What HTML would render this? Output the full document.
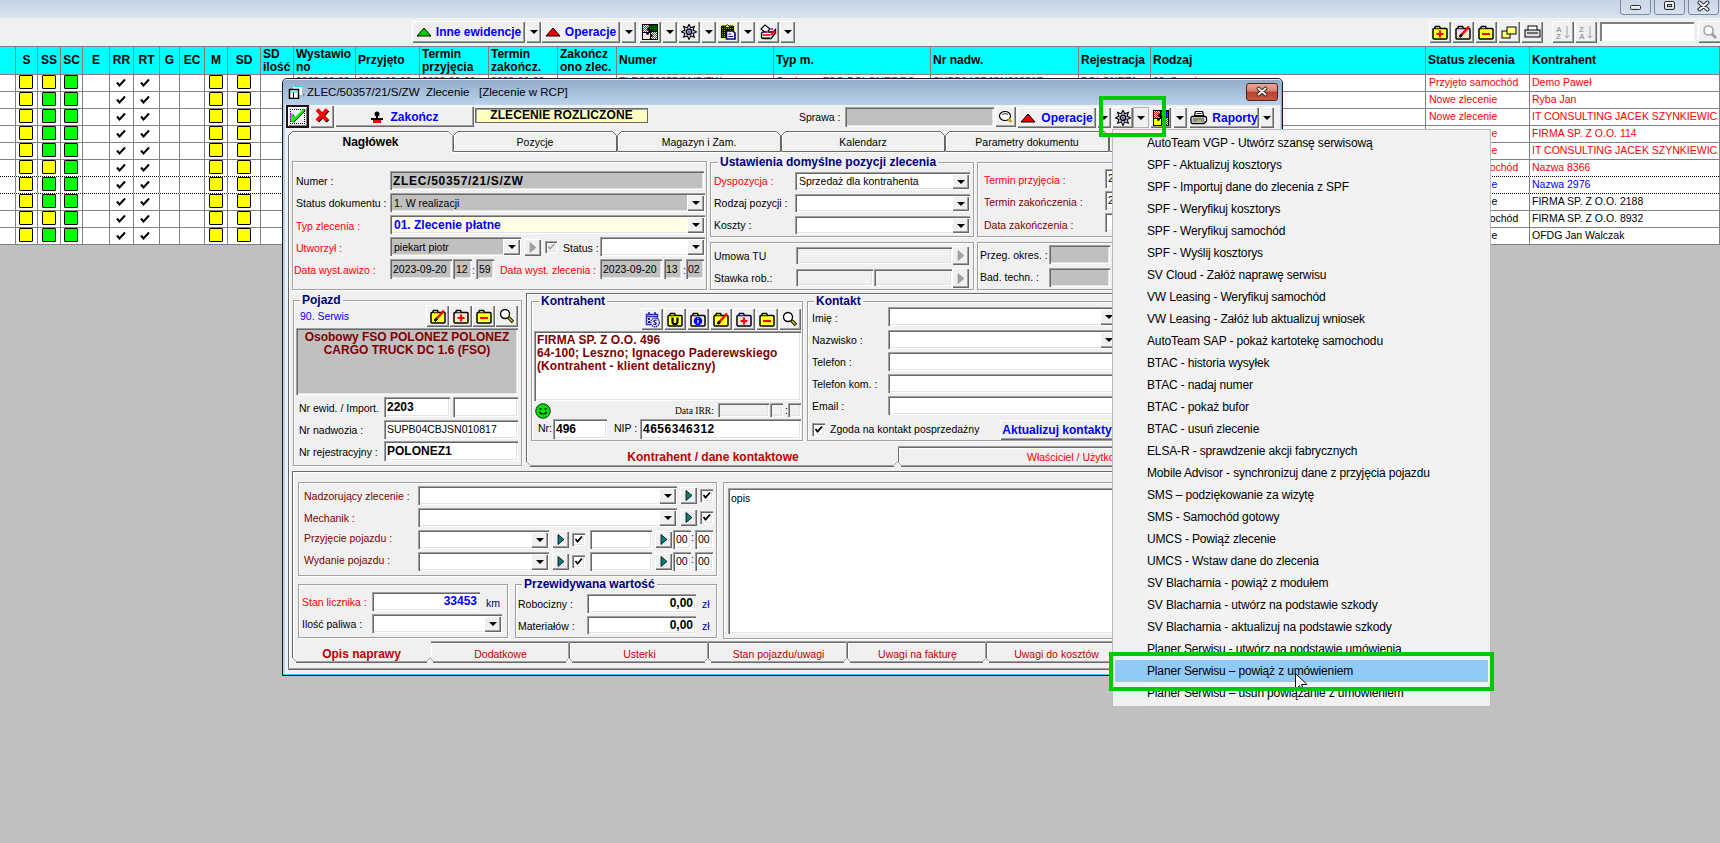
<!DOCTYPE html><html><head><meta charset="utf-8"><style>
*{box-sizing:border-box}
body{margin:0;width:1720px;height:843px;overflow:hidden;position:relative;background:#c0c0c0;font-family:"Liberation Sans",sans-serif;font-size:10.5px;color:#000}
div{position:absolute}
.t{white-space:pre;line-height:12px}
.b{font-weight:bold;font-size:12px}
.btn{background:#f0f0f0;box-shadow:inset 1px 1px #fff,inset -1px -1px #696969,inset -2px -2px #a0a0a0;display:flex;align-items:center;justify-content:center;white-space:pre}
.tri{display:block;width:0;height:0;border-left:4px solid transparent;border-right:4px solid transparent;border-top:4px solid #000}
.sunk{background:#fff;box-shadow:inset 2px 2px #808080,inset -1px -1px #fff}

.fld{box-shadow:inset 1px 1px #a0a0a0,inset 2px 2px #696969,inset -1px -1px #fff,inset -2px -2px #e3e3e3;overflow:hidden;white-space:pre}
.etch{border:1px solid #a0a0a0;box-shadow:inset 1px 1px #fff,1px 1px #fff}
</style></head><body><div style="left:0px;top:0px;width:1720px;height:18px;background:linear-gradient(#c4d1e1,#d9e4f1)"></div>
<div style="left:1620px;top:-3px;width:31px;height:18px;border:1px solid #7a88a4;border-radius:3px;background:linear-gradient(#c9d5e5,#d6e1ee)"></div>
<div style="left:1654px;top:-3px;width:31px;height:18px;border:1px solid #7a88a4;border-radius:3px;background:linear-gradient(#c9d5e5,#d6e1ee)"></div>
<div style="left:1688px;top:-3px;width:31px;height:18px;border:1px solid #7a88a4;border-radius:3px;background:linear-gradient(#c9d5e5,#d6e1ee)"></div>
<div style="left:1630px;top:5px;width:11px;height:5px;border:1px solid #2a2a3a;border-radius:1.5px;background:linear-gradient(#fafafa,#d8d8d8)"></div>
<div style="left:1664px;top:1px;width:11px;height:9px;border:1px solid #2a2a3a;border-radius:2px;background:linear-gradient(#fafafa,#d8d8d8)"></div>
<div style="left:1667px;top:4px;width:5px;height:3px;border:1px solid #2a2a3a;background:#c9d5e5"></div>
<svg style="position:absolute;left:1697px;top:0" width="14" height="12"><path d="M2.5 2.5 L10.5 9.5 M10.5 2.5 L2.5 9.5" stroke="#2a2a3a" stroke-width="4" stroke-linecap="round"/><path d="M2.5 2.5 L10.5 9.5 M10.5 2.5 L2.5 9.5" stroke="#f4f4f4" stroke-width="2" stroke-linecap="round"/></svg>
<div style="left:0px;top:18px;width:1720px;height:28px;background:#f0f0f0"></div>
<div class="btn" style="left:412px;top:21px;width:113px;height:22px;"><svg width="16" height="10" style="margin-right:4px"><path d="M1 9 L8 1 L15 9 Z" fill="#00d000" stroke="#000" stroke-width="1"/></svg><span class="b" style="color:#0000ff;position:static">Inne ewidencje</span></div>
<div class="btn" style="left:526px;top:21px;width:15px;height:22px;"><i class="tri"></i></div>
<div class="btn" style="left:541px;top:21px;width:79px;height:22px;"><svg width="16" height="10" style="margin-right:4px"><path d="M1 9 L8 1 L15 9 Z" fill="#f00000" stroke="#000" stroke-width="1"/></svg><span class="b" style="color:#0000ff;position:static">Operacje</span></div>
<div class="btn" style="left:621px;top:21px;width:15px;height:22px;"><i class="tri"></i></div>
<div class="btn" style="left:639px;top:21px;width:22px;height:22px;"><svg width="16" height="16"><defs><pattern id="dr" width="2" height="2" patternUnits="userSpaceOnUse"><rect width="2" height="2" fill="#ff0000"/><rect width="1" height="1" fill="#fff"/><rect x="1" y="1" width="1" height="1" fill="#fff"/></pattern><pattern id="db" width="2" height="2" patternUnits="userSpaceOnUse"><rect width="2" height="2" fill="#0000ff"/><rect width="1" height="1" fill="#008000"/></pattern><pattern id="dy" width="2" height="2" patternUnits="userSpaceOnUse"><rect width="2" height="2" fill="#ffff00"/><rect width="1" height="1" fill="#fff"/><rect x="1" y="1" width="1" height="1" fill="#fff"/></pattern><pattern id="dg" width="2" height="2" patternUnits="userSpaceOnUse"><rect width="2" height="2" fill="#008000"/><rect width="1" height="1" fill="#fff"/><rect x="1" y="1" width="1" height="1" fill="#fff"/></pattern></defs><rect x="0" y="0" width="16" height="16" fill="#000"/><path d="M1 1 H7 V3 Q5 3 5 5 Q5 7 7 7 V8 H1 Z" fill="url(#dr)"/><path d="M8 1 H15 V7 H11 Q11 5 9.5 5 Q8 5 8 7 Z" fill="url(#db)"/><path d="M1 9 H4 Q4 11 5.5 11 Q7 11 7 9 H8 V15 H1 Z" fill="url(#dy)"/><path d="M9 8 H15 V15 H9 V13 Q11 13 11 11.5 Q11 10 9 10 Z" fill="url(#dg)"/></svg></div>
<div class="btn" style="left:662px;top:21px;width:15px;height:22px;"><i class="tri"></i></div>
<div class="btn" style="left:678px;top:21px;width:22px;height:22px;"><svg width="16" height="16" viewBox="0 0 16 16"><path d="M8.00 0.20 L9.68 3.73 L13.37 2.43 L12.07 6.12 L15.60 7.80 L12.07 9.48 L13.37 13.17 L9.68 11.87 L8.00 15.40 L6.32 11.87 L2.63 13.17 L3.93 9.48 L0.40 7.80 L3.93 6.12 L2.63 2.43 L6.32 3.73 Z" fill="#d4d4ff" stroke="#000" stroke-width="1.1" stroke-linejoin="miter"/><circle cx="8" cy="7.8" r="2.7" fill="#b0b0e0" stroke="#000" stroke-width="1.4"/><rect x="7" y="6.8" width="2" height="2" fill="#606090"/></svg></div>
<div class="btn" style="left:701px;top:21px;width:15px;height:22px;"><i class="tri"></i></div>
<div class="btn" style="left:717px;top:21px;width:22px;height:22px;"><svg width="16" height="16"><defs><pattern id="dk" width="2" height="2" patternUnits="userSpaceOnUse"><rect width="2" height="2" fill="#000"/><rect width="1" height="1" fill="#a0a000"/></pattern></defs><path d="M1.5 3 Q1.5 2 2.5 2 H12.5 Q13.5 2 13.5 3 V13.5 H1.5 Z" fill="url(#dk)" stroke="#000" stroke-width="1.2"/><path d="M4.5 3.5 L7.5 0.5 L10.5 3.5 Z" fill="#ffff00" stroke="#000" stroke-width="0.8"/><path d="M6.5 7 H13 L15 9 V15 H6.5 Z" fill="#fff" stroke="#000080" stroke-width="1.6"/><path d="M8.5 10 H11 M8.5 12.5 H13" stroke="#000080" stroke-width="1.2"/></svg></div>
<div class="btn" style="left:740px;top:21px;width:15px;height:22px;"><i class="tri"></i></div>
<div class="btn" style="left:757px;top:21px;width:22px;height:22px;"><svg width="17" height="16"><path d="M1 5 L5 1 L10 5 L6 9 Z" fill="#fff" stroke="#000" stroke-width="1.2"/><path d="M1.5 10 Q1.5 8 3 8 H13 L15.5 5.5 V9 L11 14.5 H3 Q1.5 14.5 1.5 12.5 Z" fill="#fff" stroke="#000" stroke-width="1.3"/><path d="M2.5 11 H10.5" stroke="#f00" stroke-width="1.6"/><path d="M3 13.5 H10" stroke="#f00" stroke-width="1" stroke-dasharray="1.5 0.8"/><path d="M11 11 L15 7" stroke="#f00" stroke-width="2.2"/><rect x="11" y="4" width="2" height="2" fill="#f0f"/><rect x="6" y="7" width="2" height="2" fill="#f0f"/></svg></div>
<div class="btn" style="left:780px;top:21px;width:15px;height:22px;"><i class="tri"></i></div>
<div class="btn" style="left:1429px;top:21px;width:22px;height:22px;"><svg width="16" height="15"><defs><pattern id="dyl" width="2" height="2" patternUnits="userSpaceOnUse"><rect width="2" height="2" fill="#ffff00"/><rect width="1" height="1" fill="#ffffff"/><rect x="1" y="1" width="1" height="1" fill="#ffffff"/></pattern></defs><path d="M1 4.5 Q1 3.5 2 3.5 H2.5 L3.5 1.5 H7.5 L8.5 3.5 H14 Q15 3.5 15 4.5 V13 Q15 14 14 14 H2 Q1 14 1 13 Z" fill="url(#dyl)" stroke="#000" stroke-width="1.5"/><path d="M3 3.8 H8" stroke="#000" stroke-width="1"/><path d="M8 5.5 V12.5 M4.5 9 H11.5" stroke="#f00" stroke-width="2.2"/></svg></div>
<div class="btn" style="left:1452px;top:21px;width:22px;height:22px;"><svg width="16" height="15"><defs><pattern id="dyl" width="2" height="2" patternUnits="userSpaceOnUse"><rect width="2" height="2" fill="#ffff00"/><rect width="1" height="1" fill="#ffffff"/><rect x="1" y="1" width="1" height="1" fill="#ffffff"/></pattern></defs><path d="M1 4.5 Q1 3.5 2 3.5 H2.5 L3.5 1.5 H7.5 L8.5 3.5 H14 Q15 3.5 15 4.5 V13 Q15 14 14 14 H2 Q1 14 1 13 Z" fill="url(#dyl)" stroke="#000" stroke-width="1.5"/><path d="M3 3.8 H8" stroke="#000" stroke-width="1"/><path d="M5.5 11 L14 1.5" stroke="#f00" stroke-width="2.6"/><path d="M4.5 12 L7 9.5" stroke="#000" stroke-width="2.6"/></svg></div>
<div class="btn" style="left:1475px;top:21px;width:22px;height:22px;"><svg width="16" height="15"><defs><pattern id="dyl" width="2" height="2" patternUnits="userSpaceOnUse"><rect width="2" height="2" fill="#ffff00"/><rect width="1" height="1" fill="#ffffff"/><rect x="1" y="1" width="1" height="1" fill="#ffffff"/></pattern></defs><path d="M1 4.5 Q1 3.5 2 3.5 H2.5 L3.5 1.5 H7.5 L8.5 3.5 H14 Q15 3.5 15 4.5 V13 Q15 14 14 14 H2 Q1 14 1 13 Z" fill="url(#dyl)" stroke="#000" stroke-width="1.5"/><path d="M3 3.8 H8" stroke="#000" stroke-width="1"/><path d="M4 9 H12" stroke="#f00" stroke-width="2.2"/></svg></div>
<div class="btn" style="left:1498px;top:21px;width:22px;height:22px;"><svg width="16" height="14"><rect x="1" y="6" width="8" height="7" fill="#ffff80" stroke="#000"/><rect x="6" y="2" width="9" height="7" fill="#ffff80" stroke="#000"/></svg></div>
<div class="btn" style="left:1521px;top:21px;width:22px;height:22px;"><svg width="17" height="14"><rect x="4" y="1" width="9" height="5" fill="#fff" stroke="#000"/><rect x="1" y="5" width="15" height="7" fill="#ddd" stroke="#000"/><path d="M3 8 H14" stroke="#000"/></svg></div>
<div class="btn" style="left:1552px;top:21px;width:22px;height:22px;"><svg width="16" height="16"><text x="1" y="7.5" font-size="8" font-weight="bold" fill="#a0a0a0" font-family="Liberation Sans">A</text><text x="1" y="15" font-size="8" font-weight="bold" fill="#a0a0a0" font-family="Liberation Sans">Z</text><path d="M12 2 V14 M9.5 11.5 L12 14 L14.5 11.5" stroke="#a0a0a0" fill="none"/></svg></div>
<div class="btn" style="left:1575px;top:21px;width:22px;height:22px;"><svg width="16" height="16"><text x="1" y="7.5" font-size="8" font-weight="bold" fill="#a0a0a0" font-family="Liberation Sans">Z</text><text x="1" y="15" font-size="8" font-weight="bold" fill="#a0a0a0" font-family="Liberation Sans">A</text><path d="M12 2 V14 M9.5 11.5 L12 14 L14.5 11.5" stroke="#a0a0a0" fill="none"/></svg></div>
<div class="sunk" style="left:1600px;top:22px;width:94px;height:19px;"></div>
<div class="btn" style="left:1698px;top:21px;width:24px;height:22px;"><svg width="16" height="16"><circle cx="6.5" cy="6.5" r="4.5" fill="#fff" stroke="#a0a0a0" stroke-width="1.5"/><path d="M10 10 L14 14" stroke="#a0a0a0" stroke-width="3"/></svg></div>
<div style="left:0px;top:46px;width:1720px;height:29px;background:#00ffff"></div>
<div style="left:0px;top:75px;width:1720px;height:170px;background:#fff"></div>
<div style="left:0px;top:46px;width:1720px;height:1px;background:#8a7a7a"></div>
<div style="left:0px;top:74px;width:1720px;height:1px;background:#8a7a7a"></div>
<div style="left:0px;top:91px;width:1719px;height:1px;background:#808080"></div>
<div style="left:0px;top:108px;width:1719px;height:1px;background:#808080"></div>
<div style="left:0px;top:125px;width:1719px;height:1px;background:#808080"></div>
<div style="left:0px;top:142px;width:1719px;height:1px;background:#808080"></div>
<div style="left:0px;top:159px;width:1719px;height:1px;background:#808080"></div>
<div style="left:0px;top:176px;width:1719px;height:1px;background:#808080"></div>
<div style="left:0px;top:193px;width:1719px;height:1px;background:#808080"></div>
<div style="left:0px;top:210px;width:1719px;height:1px;background:#808080"></div>
<div style="left:0px;top:227px;width:1719px;height:1px;background:#808080"></div>
<div style="left:0px;top:244px;width:1719px;height:1px;background:#808080"></div>
<div style="left:15px;top:46px;width:1px;height:199px;background:#808080"></div>
<div style="left:37px;top:46px;width:1px;height:199px;background:#808080"></div>
<div style="left:60px;top:46px;width:1px;height:199px;background:#808080"></div>
<div style="left:82px;top:46px;width:1px;height:199px;background:#808080"></div>
<div style="left:109px;top:46px;width:1px;height:199px;background:#808080"></div>
<div style="left:133px;top:46px;width:1px;height:199px;background:#808080"></div>
<div style="left:159px;top:46px;width:1px;height:199px;background:#808080"></div>
<div style="left:179px;top:46px;width:1px;height:199px;background:#808080"></div>
<div style="left:204px;top:46px;width:1px;height:199px;background:#808080"></div>
<div style="left:227px;top:46px;width:1px;height:199px;background:#808080"></div>
<div style="left:260px;top:46px;width:1px;height:199px;background:#808080"></div>
<div style="left:293px;top:46px;width:1px;height:199px;background:#808080"></div>
<div style="left:355px;top:46px;width:1px;height:199px;background:#808080"></div>
<div style="left:419px;top:46px;width:1px;height:199px;background:#808080"></div>
<div style="left:488px;top:46px;width:1px;height:199px;background:#808080"></div>
<div style="left:557px;top:46px;width:1px;height:199px;background:#808080"></div>
<div style="left:616px;top:46px;width:1px;height:199px;background:#808080"></div>
<div style="left:773px;top:46px;width:1px;height:199px;background:#808080"></div>
<div style="left:930px;top:46px;width:1px;height:199px;background:#808080"></div>
<div style="left:1078px;top:46px;width:1px;height:199px;background:#808080"></div>
<div style="left:1150px;top:46px;width:1px;height:199px;background:#808080"></div>
<div style="left:1425px;top:46px;width:1px;height:199px;background:#808080"></div>
<div style="left:1529px;top:46px;width:1px;height:199px;background:#808080"></div>
<div style="left:1719px;top:46px;width:1px;height:199px;background:#808080"></div>
<div class="t b" style="left:16px;top:54px;width:21px;text-align:center">S</div>
<div class="t b" style="left:38px;top:54px;width:22px;text-align:center">SS</div>
<div class="t b" style="left:61px;top:54px;width:21px;text-align:center">SC</div>
<div class="t b" style="left:83px;top:54px;width:26px;text-align:center">E</div>
<div class="t b" style="left:110px;top:54px;width:23px;text-align:center">RR</div>
<div class="t b" style="left:134px;top:54px;width:25px;text-align:center">RT</div>
<div class="t b" style="left:160px;top:54px;width:19px;text-align:center">G</div>
<div class="t b" style="left:180px;top:54px;width:24px;text-align:center">EC</div>
<div class="t b" style="left:205px;top:54px;width:22px;text-align:center">M</div>
<div class="t b" style="left:228px;top:54px;width:32px;text-align:center">SD</div>
<div class="t b" style="left:263px;top:48px;">SD</div>
<div class="t b" style="left:263px;top:61px;">ilość</div>
<div class="t b" style="left:296px;top:48px;">Wystawio</div>
<div class="t b" style="left:296px;top:61px;">no</div>
<div class="t b" style="left:358px;top:54px;">Przyjęto</div>
<div class="t b" style="left:422px;top:48px;">Termin</div>
<div class="t b" style="left:422px;top:61px;">przyjęcia</div>
<div class="t b" style="left:491px;top:48px;">Termin</div>
<div class="t b" style="left:491px;top:61px;">zakończ.</div>
<div class="t b" style="left:560px;top:48px;">Zakończ</div>
<div class="t b" style="left:560px;top:61px;">ono zlec.</div>
<div class="t b" style="left:619px;top:54px;">Numer</div>
<div class="t b" style="left:776px;top:54px;">Typ m.</div>
<div class="t b" style="left:933px;top:54px;">Nr nadw.</div>
<div class="t b" style="left:1081px;top:54px;">Rejestracja</div>
<div class="t b" style="left:1153px;top:54px;">Rodzaj</div>
<div class="t b" style="left:1428px;top:54px;">Status zlecenia</div>
<div class="t b" style="left:1532px;top:54px;">Kontrahent</div>
<div style="left:19px;top:75px;width:14px;height:14px;background:#ffff00;border:1.5px solid #000;border-radius:1px"></div>
<div style="left:42px;top:75px;width:14px;height:14px;background:#ffff00;border:1.5px solid #000;border-radius:1px"></div>
<div style="left:64px;top:75px;width:14px;height:14px;background:#00ff00;border:1.5px solid #000;border-radius:1px"></div>
<div style="left:209px;top:75px;width:14px;height:14px;background:#ffff00;border:1.5px solid #000;border-radius:1px"></div>
<div style="left:237px;top:75px;width:14px;height:14px;background:#ffff00;border:1.5px solid #000;border-radius:1px"></div>
<div style="left:116px;top:77px"><svg width="10" height="9" viewBox="0 0 10 9"><path d="M1 4.5 L3.5 7.5 L9 1.5" stroke="#000" stroke-width="2" fill="none"/></svg></div>
<div style="left:140px;top:77px"><svg width="10" height="9" viewBox="0 0 10 9"><path d="M1 4.5 L3.5 7.5 L9 1.5" stroke="#000" stroke-width="2" fill="none"/></svg></div>
<div class="t" style="left:1429px;top:76px;color:#f00">Przyjęto samochód</div>
<div class="t" style="left:1532px;top:76px;width:186px;overflow:hidden;color:#f00">Demo Paweł</div>
<div class="t" style="left:296px;top:75px;color:#f00">2023-09-20</div>
<div class="t" style="left:358px;top:75px;color:#f00">2023-09-20</div>
<div class="t" style="left:422px;top:75px;color:#f00">2023-09-20</div>
<div class="t" style="left:491px;top:75px;color:#f00">2023-09-20</div>
<div class="t" style="left:619px;top:75px;color:#f00">ZLEC/50357/21/S/ZW</div>
<div class="t" style="left:776px;top:75px;color:#f00">Osobowy FSO POLONEZ PO</div>
<div class="t" style="left:933px;top:75px;color:#f00">SUPB04CBJSN010817</div>
<div class="t" style="left:1081px;top:75px;color:#f00">POLONEZ1</div>
<div class="t" style="left:1153px;top:75px;color:#f00">90. Serwis</div>
<div style="left:19px;top:92px;width:14px;height:14px;background:#ffff00;border:1.5px solid #000;border-radius:1px"></div>
<div style="left:42px;top:92px;width:14px;height:14px;background:#00ff00;border:1.5px solid #000;border-radius:1px"></div>
<div style="left:64px;top:92px;width:14px;height:14px;background:#00ff00;border:1.5px solid #000;border-radius:1px"></div>
<div style="left:209px;top:92px;width:14px;height:14px;background:#ffff00;border:1.5px solid #000;border-radius:1px"></div>
<div style="left:237px;top:92px;width:14px;height:14px;background:#ffff00;border:1.5px solid #000;border-radius:1px"></div>
<div style="left:116px;top:94px"><svg width="10" height="9" viewBox="0 0 10 9"><path d="M1 4.5 L3.5 7.5 L9 1.5" stroke="#000" stroke-width="2" fill="none"/></svg></div>
<div style="left:140px;top:94px"><svg width="10" height="9" viewBox="0 0 10 9"><path d="M1 4.5 L3.5 7.5 L9 1.5" stroke="#000" stroke-width="2" fill="none"/></svg></div>
<div class="t" style="left:1429px;top:93px;color:#f00">Nowe zlecenie</div>
<div class="t" style="left:1532px;top:93px;width:186px;overflow:hidden;color:#f00">Ryba Jan</div>
<div style="left:19px;top:109px;width:14px;height:14px;background:#ffff00;border:1.5px solid #000;border-radius:1px"></div>
<div style="left:42px;top:109px;width:14px;height:14px;background:#00ff00;border:1.5px solid #000;border-radius:1px"></div>
<div style="left:64px;top:109px;width:14px;height:14px;background:#00ff00;border:1.5px solid #000;border-radius:1px"></div>
<div style="left:209px;top:109px;width:14px;height:14px;background:#ffff00;border:1.5px solid #000;border-radius:1px"></div>
<div style="left:237px;top:109px;width:14px;height:14px;background:#ffff00;border:1.5px solid #000;border-radius:1px"></div>
<div style="left:116px;top:111px"><svg width="10" height="9" viewBox="0 0 10 9"><path d="M1 4.5 L3.5 7.5 L9 1.5" stroke="#000" stroke-width="2" fill="none"/></svg></div>
<div style="left:140px;top:111px"><svg width="10" height="9" viewBox="0 0 10 9"><path d="M1 4.5 L3.5 7.5 L9 1.5" stroke="#000" stroke-width="2" fill="none"/></svg></div>
<div class="t" style="left:1429px;top:110px;color:#f00">Nowe zlecenie</div>
<div class="t" style="left:1532px;top:110px;width:186px;overflow:hidden;color:#f00">IT CONSULTING JACEK SZYNKIEWICZ</div>
<div style="left:19px;top:126px;width:14px;height:14px;background:#ffff00;border:1.5px solid #000;border-radius:1px"></div>
<div style="left:42px;top:126px;width:14px;height:14px;background:#00ff00;border:1.5px solid #000;border-radius:1px"></div>
<div style="left:64px;top:126px;width:14px;height:14px;background:#00ff00;border:1.5px solid #000;border-radius:1px"></div>
<div style="left:209px;top:126px;width:14px;height:14px;background:#ffff00;border:1.5px solid #000;border-radius:1px"></div>
<div style="left:237px;top:126px;width:14px;height:14px;background:#ffff00;border:1.5px solid #000;border-radius:1px"></div>
<div style="left:116px;top:128px"><svg width="10" height="9" viewBox="0 0 10 9"><path d="M1 4.5 L3.5 7.5 L9 1.5" stroke="#000" stroke-width="2" fill="none"/></svg></div>
<div style="left:140px;top:128px"><svg width="10" height="9" viewBox="0 0 10 9"><path d="M1 4.5 L3.5 7.5 L9 1.5" stroke="#000" stroke-width="2" fill="none"/></svg></div>
<div class="t" style="left:1429px;top:127px;color:#f00">Nowe zlecenie</div>
<div class="t" style="left:1532px;top:127px;width:186px;overflow:hidden;color:#f00">FIRMA SP. Z O.O. 114</div>
<div style="left:19px;top:143px;width:14px;height:14px;background:#ffff00;border:1.5px solid #000;border-radius:1px"></div>
<div style="left:42px;top:143px;width:14px;height:14px;background:#00ff00;border:1.5px solid #000;border-radius:1px"></div>
<div style="left:64px;top:143px;width:14px;height:14px;background:#00ff00;border:1.5px solid #000;border-radius:1px"></div>
<div style="left:209px;top:143px;width:14px;height:14px;background:#ffff00;border:1.5px solid #000;border-radius:1px"></div>
<div style="left:237px;top:143px;width:14px;height:14px;background:#ffff00;border:1.5px solid #000;border-radius:1px"></div>
<div style="left:116px;top:145px"><svg width="10" height="9" viewBox="0 0 10 9"><path d="M1 4.5 L3.5 7.5 L9 1.5" stroke="#000" stroke-width="2" fill="none"/></svg></div>
<div style="left:140px;top:145px"><svg width="10" height="9" viewBox="0 0 10 9"><path d="M1 4.5 L3.5 7.5 L9 1.5" stroke="#000" stroke-width="2" fill="none"/></svg></div>
<div class="t" style="left:1429px;top:144px;color:#f00">Nowe zlecenie</div>
<div class="t" style="left:1532px;top:144px;width:186px;overflow:hidden;color:#f00">IT CONSULTING JACEK SZYNKIEWICZ</div>
<div style="left:19px;top:160px;width:14px;height:14px;background:#ffff00;border:1.5px solid #000;border-radius:1px"></div>
<div style="left:42px;top:160px;width:14px;height:14px;background:#ffff00;border:1.5px solid #000;border-radius:1px"></div>
<div style="left:64px;top:160px;width:14px;height:14px;background:#00ff00;border:1.5px solid #000;border-radius:1px"></div>
<div style="left:209px;top:160px;width:14px;height:14px;background:#ffff00;border:1.5px solid #000;border-radius:1px"></div>
<div style="left:237px;top:160px;width:14px;height:14px;background:#ffff00;border:1.5px solid #000;border-radius:1px"></div>
<div style="left:116px;top:162px"><svg width="10" height="9" viewBox="0 0 10 9"><path d="M1 4.5 L3.5 7.5 L9 1.5" stroke="#000" stroke-width="2" fill="none"/></svg></div>
<div style="left:140px;top:162px"><svg width="10" height="9" viewBox="0 0 10 9"><path d="M1 4.5 L3.5 7.5 L9 1.5" stroke="#000" stroke-width="2" fill="none"/></svg></div>
<div class="t" style="left:1429px;top:161px;color:#f00">Przyjęto samochód</div>
<div class="t" style="left:1532px;top:161px;width:186px;overflow:hidden;color:#f00">Nazwa 8366</div>
<div style="left:19px;top:177px;width:14px;height:14px;background:#ffff00;border:1.5px solid #000;border-radius:1px"></div>
<div style="left:42px;top:177px;width:14px;height:14px;background:#00ff00;border:1.5px solid #000;border-radius:1px"></div>
<div style="left:64px;top:177px;width:14px;height:14px;background:#00ff00;border:1.5px solid #000;border-radius:1px"></div>
<div style="left:209px;top:177px;width:14px;height:14px;background:#ffff00;border:1.5px solid #000;border-radius:1px"></div>
<div style="left:237px;top:177px;width:14px;height:14px;background:#ffff00;border:1.5px solid #000;border-radius:1px"></div>
<div style="left:116px;top:179px"><svg width="10" height="9" viewBox="0 0 10 9"><path d="M1 4.5 L3.5 7.5 L9 1.5" stroke="#000" stroke-width="2" fill="none"/></svg></div>
<div style="left:140px;top:179px"><svg width="10" height="9" viewBox="0 0 10 9"><path d="M1 4.5 L3.5 7.5 L9 1.5" stroke="#000" stroke-width="2" fill="none"/></svg></div>
<div class="t" style="left:1429px;top:178px;color:#00f">Nowe zlecenie</div>
<div class="t" style="left:1532px;top:178px;width:186px;overflow:hidden;color:#00f">Nazwa 2976</div>
<div style="left:19px;top:194px;width:14px;height:14px;background:#ffff00;border:1.5px solid #000;border-radius:1px"></div>
<div style="left:42px;top:194px;width:14px;height:14px;background:#00ff00;border:1.5px solid #000;border-radius:1px"></div>
<div style="left:64px;top:194px;width:14px;height:14px;background:#00ff00;border:1.5px solid #000;border-radius:1px"></div>
<div style="left:209px;top:194px;width:14px;height:14px;background:#ffff00;border:1.5px solid #000;border-radius:1px"></div>
<div style="left:237px;top:194px;width:14px;height:14px;background:#ffff00;border:1.5px solid #000;border-radius:1px"></div>
<div style="left:116px;top:196px"><svg width="10" height="9" viewBox="0 0 10 9"><path d="M1 4.5 L3.5 7.5 L9 1.5" stroke="#000" stroke-width="2" fill="none"/></svg></div>
<div style="left:140px;top:196px"><svg width="10" height="9" viewBox="0 0 10 9"><path d="M1 4.5 L3.5 7.5 L9 1.5" stroke="#000" stroke-width="2" fill="none"/></svg></div>
<div class="t" style="left:1429px;top:195px;color:#000">Nowe zlecenie</div>
<div class="t" style="left:1532px;top:195px;width:186px;overflow:hidden;color:#000">FIRMA SP. Z O.O. 2188</div>
<div style="left:19px;top:211px;width:14px;height:14px;background:#ffff00;border:1.5px solid #000;border-radius:1px"></div>
<div style="left:42px;top:211px;width:14px;height:14px;background:#ffff00;border:1.5px solid #000;border-radius:1px"></div>
<div style="left:64px;top:211px;width:14px;height:14px;background:#00ff00;border:1.5px solid #000;border-radius:1px"></div>
<div style="left:209px;top:211px;width:14px;height:14px;background:#ffff00;border:1.5px solid #000;border-radius:1px"></div>
<div style="left:237px;top:211px;width:14px;height:14px;background:#ffff00;border:1.5px solid #000;border-radius:1px"></div>
<div style="left:116px;top:213px"><svg width="10" height="9" viewBox="0 0 10 9"><path d="M1 4.5 L3.5 7.5 L9 1.5" stroke="#000" stroke-width="2" fill="none"/></svg></div>
<div style="left:140px;top:213px"><svg width="10" height="9" viewBox="0 0 10 9"><path d="M1 4.5 L3.5 7.5 L9 1.5" stroke="#000" stroke-width="2" fill="none"/></svg></div>
<div class="t" style="left:1429px;top:212px;color:#000">Przyjęto samochód</div>
<div class="t" style="left:1532px;top:212px;width:186px;overflow:hidden;color:#000">FIRMA SP. Z O.O. 8932</div>
<div style="left:19px;top:228px;width:14px;height:14px;background:#ffff00;border:1.5px solid #000;border-radius:1px"></div>
<div style="left:42px;top:228px;width:14px;height:14px;background:#00ff00;border:1.5px solid #000;border-radius:1px"></div>
<div style="left:64px;top:228px;width:14px;height:14px;background:#00ff00;border:1.5px solid #000;border-radius:1px"></div>
<div style="left:209px;top:228px;width:14px;height:14px;background:#ffff00;border:1.5px solid #000;border-radius:1px"></div>
<div style="left:237px;top:228px;width:14px;height:14px;background:#ffff00;border:1.5px solid #000;border-radius:1px"></div>
<div style="left:116px;top:230px"><svg width="10" height="9" viewBox="0 0 10 9"><path d="M1 4.5 L3.5 7.5 L9 1.5" stroke="#000" stroke-width="2" fill="none"/></svg></div>
<div style="left:140px;top:230px"><svg width="10" height="9" viewBox="0 0 10 9"><path d="M1 4.5 L3.5 7.5 L9 1.5" stroke="#000" stroke-width="2" fill="none"/></svg></div>
<div class="t" style="left:1429px;top:229px;color:#000">Nowe zlecenie</div>
<div class="t" style="left:1532px;top:229px;width:186px;overflow:hidden;color:#000">OFDG Jan Walczak</div>
<div style="left:0px;top:176px;width:1719px;height:1px;background:repeating-linear-gradient(90deg,#000 0 1px,#fff 1px 2px)"></div>
<div style="left:0px;top:193px;width:1719px;height:1px;background:repeating-linear-gradient(90deg,#000 0 1px,#fff 1px 2px)"></div>
<div class="t" style="left:1153px;top:93px;color:#f00">90. Serwis</div>
<div class="t" style="left:1153px;top:110px;color:#f00">90. Serwis</div>
<div class="t" style="left:1153px;top:127px;color:#f00">90. Serwis</div>
<div style="left:282px;top:78px;width:1001px;height:598px;border:1px solid #101820;border-radius:5px 5px 0 0;background:#b9d1ea;overflow:hidden"><div style="left:0;top:0;right:0;height:26px;background:linear-gradient(#94adcb,#bad2eb);border-top:1px solid #e6eef6;border-radius:4px 4px 0 0"></div><div style="left:2px;top:26px;right:2px;bottom:1px;background:#f0f0f0"></div><div style="right:0;top:6px;bottom:0;width:1px;background:#38c8ff"></div><div style="left:0;right:0;bottom:0;height:1px;background:#38c8ff"></div></div>
<svg style="position:absolute;left:287px;top:84px" width="18" height="15"><path d="M6 2 H15 V11 H6 Z" fill="#fff"/><path d="M6.5 2.5 H15" stroke="#30e0f0" stroke-width="1.5"/><path d="M16 9 L18 11 L16 13 Z" fill="#888"/><path d="M2.5 5.5 H11.5 V14.5 H2.5 Z" fill="#fff" stroke="#000" stroke-width="1.5"/><path d="M3 8 H11" stroke="#30e0f0" stroke-width="1.3"/><path d="M6.5 8.5 V14" stroke="#000" stroke-width="1"/></svg>
<div class="t" style="left:307px;top:85px;font-size:11.5px;line-height:14px;color:#000">ZLEC/50357/21/S/ZW  Zlecenie   [Zlecenie w RCP]</div>
<div style="left:1246px;top:83px;width:32px;height:18px;border:1px solid #4a2020;border-radius:3px;background:linear-gradient(#e8a89a 0%,#d9806e 45%,#b8402a 50%,#c85a40 100%)"></div>
<svg style="position:absolute;left:1255px;top:85px" width="14" height="13"><path d="M3.5 3.5 L10.5 9.5 M10.5 3.5 L3.5 9.5" stroke="#3a2020" stroke-width="3.8" stroke-linecap="round"/><path d="M3.5 3.5 L10.5 9.5 M10.5 3.5 L3.5 9.5" stroke="#f0f0f0" stroke-width="2" stroke-linecap="round"/></svg>
<div style="left:286px;top:105px;width:23px;height:23px;background:#f0f0f0;border:2px solid #201010;box-shadow:inset 1px 1px #fff,inset -1px -1px #808080"></div>
<div style="left:290px;top:109px;width:15px;height:15px;border:1px dotted #000"></div>
<svg style="position:absolute;left:289px;top:107px" width="18" height="18"><path d="M1.5 7 H4.5 L5 11 L14.5 1.5 L16 3 L4.5 15 L1.5 14 Z" fill="#000" transform="translate(0.6,0.6)"/><path d="M1.5 7 H4.5 L5 11 L14.5 1.5 L16 3 L4.5 15 L1.5 14 Z" fill="#00ff00"/><path d="M1.5 7 V14" stroke="#ff00ff" stroke-width="0.9" stroke-dasharray="1 1"/></svg>
<div class="btn" style="left:310px;top:105px;width:24px;height:23px;"><svg width="16" height="16" style="margin-top:-4px"><path d="M3 2.5 L13 13.5 M13 2.5 L3 13.5" stroke="#000" stroke-width="3.6" transform="translate(0.9,0.9)"/><path d="M3 2.5 L13 13.5 M13 2.5 L3 13.5" stroke="#ff0000" stroke-width="3.6"/></svg></div>
<div class="btn" style="left:335px;top:106px;width:139px;height:21px;"><svg width="14" height="12" style="margin-right:6px"><circle cx="7" cy="3" r="2.5" fill="#000"/><rect x="6" y="3" width="2" height="4" fill="#000"/><path d="M1 7 H13 V9 H1 Z" fill="#000"/><rect x="3" y="9" width="8" height="3" fill="#e00"/></svg><span class="b" style="position:static;color:#0000ff">Zakończ</span></div>
<div class="b" style="left:475px;top:108px;width:173px;height:15px;background:#ffffc0;border:1px solid #696969;box-shadow:inset 1px 1px #a0a0a0;text-align:center;line-height:13px;letter-spacing:0.1px">ZLECENIE ROZLICZONE</div>
<div class="t" style="left:799px;top:111px;color:#000;">Sprawa :</div>
<div class="fld" style="left:845px;top:107px;width:149px;height:20px;background:#c0c0c0;"></div>
<div class="btn" style="left:995px;top:106px;width:21px;height:21px;"><svg width="16" height="14"><ellipse cx="7" cy="6" rx="5.5" ry="4.5" fill="#fff" stroke="#000" stroke-width="1.2"/><path d="M4 4.5 Q7 2.5 10 4.5" stroke="#000" fill="none" stroke-width="0.8"/><path d="M10.5 9 L13.5 12" stroke="#c0b000" stroke-width="3"/></svg></div>
<div class="btn" style="left:1017px;top:107px;width:79px;height:21px;"><svg width="16" height="10" style="margin-right:5px"><path d="M1 9 L8 1 L15 9 Z" fill="#f00000" stroke="#000" stroke-width="1"/></svg><span class="b" style="position:static;color:#0000ff">Operacje</span></div>
<div class="btn" style="left:1097px;top:107px;width:14px;height:21px;"><i class="tri"></i></div>
<div class="btn" style="left:1112px;top:107px;width:21px;height:21px;"><svg width="16" height="16" viewBox="0 0 16 16"><path d="M8.00 0.20 L9.68 3.73 L13.37 2.43 L12.07 6.12 L15.60 7.80 L12.07 9.48 L13.37 13.17 L9.68 11.87 L8.00 15.40 L6.32 11.87 L2.63 13.17 L3.93 9.48 L0.40 7.80 L3.93 6.12 L2.63 2.43 L6.32 3.73 Z" fill="#d4d4ff" stroke="#000" stroke-width="1.1" stroke-linejoin="miter"/><circle cx="8" cy="7.8" r="2.7" fill="#b0b0e0" stroke="#000" stroke-width="1.4"/><rect x="7" y="6.8" width="2" height="2" fill="#606090"/></svg></div>
<div style="left:1133px;top:107px;width:16px;height:21px;border:1px solid #b0b0b0;background:#f0f0f0;display:flex;align-items:center;justify-content:center"><i class="tri"></i></div>
<div class="btn" style="left:1150px;top:107px;width:21px;height:21px;"><svg width="16" height="16"><defs><pattern id="dr" width="2" height="2" patternUnits="userSpaceOnUse"><rect width="2" height="2" fill="#ff0000"/><rect width="1" height="1" fill="#fff"/><rect x="1" y="1" width="1" height="1" fill="#fff"/></pattern><pattern id="db" width="2" height="2" patternUnits="userSpaceOnUse"><rect width="2" height="2" fill="#0000ff"/><rect width="1" height="1" fill="#008000"/></pattern><pattern id="dy" width="2" height="2" patternUnits="userSpaceOnUse"><rect width="2" height="2" fill="#ffff00"/><rect width="1" height="1" fill="#fff"/><rect x="1" y="1" width="1" height="1" fill="#fff"/></pattern><pattern id="dg" width="2" height="2" patternUnits="userSpaceOnUse"><rect width="2" height="2" fill="#008000"/><rect width="1" height="1" fill="#fff"/><rect x="1" y="1" width="1" height="1" fill="#fff"/></pattern></defs><rect x="0" y="0" width="16" height="16" fill="#000"/><path d="M1 1 H7 V3 Q5 3 5 5 Q5 7 7 7 V8 H1 Z" fill="url(#dr)"/><path d="M8 1 H15 V7 H11 Q11 5 9.5 5 Q8 5 8 7 Z" fill="url(#db)"/><path d="M1 9 H4 Q4 11 5.5 11 Q7 11 7 9 H8 V15 H1 Z" fill="url(#dy)"/><path d="M9 8 H15 V15 H9 V13 Q11 13 11 11.5 Q11 10 9 10 Z" fill="url(#dg)"/></svg></div>
<div class="btn" style="left:1173px;top:107px;width:14px;height:21px;"><i class="tri"></i></div>
<div class="btn" style="left:1189px;top:107px;width:70px;height:21px;"><svg width="18" height="15" style="margin-right:4px"><path d="M5.5 1.5 H12.5 L13.5 5.5 H4.5 Z" fill="#fff" stroke="#000" stroke-width="1.2"/><path d="M6.5 3.5 H11.5" stroke="#000" stroke-width="0.8"/><path d="M2.5 6.5 Q1 6.5 1 8 V12 Q1 13.5 2.5 13.5 H14 L16.5 11 V8 Q16.5 6.5 15 6.5 Z" fill="#fff" stroke="#000" stroke-width="1.3"/><path d="M2.5 9 H14.5 M2.5 11 H14.5" stroke="#000" stroke-width="0.9"/><rect x="7" y="10.5" width="4" height="1.2" fill="#e0d000"/></svg><span class="b" style="position:static;color:#0000ff">Raporty</span></div>
<div class="btn" style="left:1260px;top:107px;width:14px;height:21px;"><i class="tri"></i></div>
<svg style="position:absolute;left:0;top:0" width="1720" height="843"><path d="M288.5 669 V151" stroke="#696969" fill="none"/><path d="M289.5 668 V152" stroke="#fff" fill="none"/><path d="M453.5 151 V135.5 L457.5 131.5 H612.5 L616.5 135.5 V151" fill="#f0f0f0" stroke="#696969"/><path d="M454.5 151 V136 L457.5 132.5 H612" fill="none" stroke="#fff"/><path d="M453.5 151.5 H617" stroke="#696969"/><path d="M453 152.5 H617" stroke="#fff"/><path d="M617.5 151 V135.5 L621.5 131.5 H776.5 L780.5 135.5 V151" fill="#f0f0f0" stroke="#696969"/><path d="M618.5 151 V136 L621.5 132.5 H776" fill="none" stroke="#fff"/><path d="M617.5 151.5 H781" stroke="#696969"/><path d="M617 152.5 H781" stroke="#fff"/><path d="M781.5 151 V135.5 L785.5 131.5 H940.5 L944.5 135.5 V151" fill="#f0f0f0" stroke="#696969"/><path d="M782.5 151 V136 L785.5 132.5 H940" fill="none" stroke="#fff"/><path d="M781.5 151.5 H945" stroke="#696969"/><path d="M781 152.5 H945" stroke="#fff"/><path d="M945.5 151 V135.5 L949.5 131.5 H1104.5 L1108.5 135.5 V151" fill="#f0f0f0" stroke="#696969"/><path d="M946.5 151 V136 L949.5 132.5 H1104" fill="none" stroke="#fff"/><path d="M945.5 151.5 H1109" stroke="#696969"/><path d="M945 152.5 H1109" stroke="#fff"/><path d="M1109.5 151 V135.5 L1113.5 131.5 H1268.5 L1272.5 135.5 V151" fill="#f0f0f0" stroke="#696969"/><path d="M1110.5 151 V136 L1113.5 132.5 H1268" fill="none" stroke="#fff"/><path d="M1109.5 151.5 H1273" stroke="#696969"/><path d="M1109 152.5 H1273" stroke="#fff"/><path d="M288.5 153 V135.5 L292.5 131.5 H448.5 L452.5 135.5 V153 Z" fill="#f0f0f0" stroke="none"/><path d="M288.5 160 V135.5 L292.5 131.5 H448.5" fill="none" stroke="#696969"/><path d="M289.5 160 V136 L292.5 132.5 H448" fill="none" stroke="#fff"/><path d="M448.5 131.5 L452.5 135.5 V152" fill="none" stroke="#a0a0a0"/></svg>
<div class="t b" style="left:288px;top:136px;width:165px;text-align:center">Nagłówek</div>
<div class="t" style="left:453px;top:136px;width:164px;text-align:center">Pozycje</div>
<div class="t" style="left:617px;top:136px;width:164px;text-align:center">Magazyn i Zam.</div>
<div class="t" style="left:781px;top:136px;width:164px;text-align:center">Kalendarz</div>
<div class="t" style="left:945px;top:136px;width:164px;text-align:center">Parametry dokumentu</div>
<div class="t" style="left:1109px;top:136px;width:164px;text-align:center"></div>
<div class="etch" style="left:292px;top:161px;width:415px;height:129px;"></div>
<div class="t" style="left:296px;top:175px;color:#000;">Numer :</div>
<div class="fld" style="left:390px;top:171px;width:314px;height:19px;background:#c0c0c0;"><div class="t b" style="left:3px;top:4px;font-size:12px;letter-spacing:0.7px">ZLEC/50357/21/S/ZW</div></div>
<div class="t" style="left:296px;top:197px;color:#000;">Status dokumentu :</div>
<div class="fld" style="left:390px;top:193px;width:315px;height:19px;background:#c0c0c0;"><div class="t" style="left:4px;top:4px">1. W realizacji</div></div>
<div class="btn" style="left:687px;top:195px;width:17px;height:16px;"><i class="tri"></i></div>
<div class="t" style="left:296px;top:220px;color:#f00;">Typ zlecenia :</div>
<div class="fld" style="left:390px;top:215px;width:315px;height:19px;background:#fffde6;"><div class="t b" style="left:4px;top:4px;color:#0000ff">01. Zlecenie płatne</div></div>
<div class="btn" style="left:687px;top:217px;width:17px;height:16px;"><i class="tri"></i></div>
<div class="t" style="left:296px;top:242px;color:#f00;">Utworzył :</div>
<div class="fld" style="left:390px;top:237px;width:131px;height:19px;background:#c0c0c0;"><div class="t" style="left:4px;top:4px">piekart piotr</div></div>
<div class="btn" style="left:503px;top:239px;width:17px;height:16px;"><i class="tri"></i></div>
<div class="btn" style="left:524px;top:239px;width:17px;height:17px;"><svg width="8" height="11"><path d="M1 0.5 L7 5.5 L1 10.5 Z" fill="#a0a0a0" stroke="#a0a0a0" stroke-width="0.8"/></svg></div>
<div class="fld" style="left:545px;top:241px;width:12px;height:12px;background:#f0f0f0"><svg style="position:absolute;left:2px;top:2px" width="8" height="8" viewBox="0 0 9 9"><path d="M1.5 4 L3.5 6.5 L8 1.5" stroke="#a0a0a0" stroke-width="1.8" fill="none"/></svg></div>
<div class="t" style="left:563px;top:242px;color:#000;">Status :</div>
<div class="fld" style="left:600px;top:237px;width:105px;height:19px;background:#fff;"></div>
<div class="btn" style="left:687px;top:239px;width:17px;height:16px;"><i class="tri"></i></div>
<div class="t" style="left:294px;top:264px;color:#f00;">Data wyst.awizo :</div>
<div class="fld" style="left:390px;top:259px;width:62px;height:20px;background:#c0c0c0;"><div class="t" style="left:3px;top:4px">2023-09-20</div></div>
<div class="fld" style="left:453px;top:259px;width:19px;height:20px;background:#c0c0c0;"><div class="t" style="left:3px;top:4px">12</div></div>
<div class="t" style="left:472px;top:264px;color:#00f;">:</div>
<div class="fld" style="left:476px;top:259px;width:18px;height:20px;background:#c0c0c0;"><div class="t" style="left:3px;top:4px">59</div></div>
<div class="t" style="left:500px;top:264px;color:#f00;">Data wyst. zlecenia :</div>
<div class="fld" style="left:600px;top:259px;width:62px;height:20px;background:#c0c0c0;"><div class="t" style="left:3px;top:4px">2023-09-20</div></div>
<div class="fld" style="left:664px;top:259px;width:18px;height:20px;background:#c0c0c0;"><div class="t" style="left:2px;top:4px">13</div></div>
<div class="t" style="left:683px;top:264px;color:#00f;">:</div>
<div class="fld" style="left:686px;top:259px;width:18px;height:20px;background:#c0c0c0;"><div class="t" style="left:2px;top:4px">02</div></div>
<div class="etch" style="left:710px;top:162px;width:264px;height:75px;"></div>
<div class="t b" style="left:718px;top:156px;padding:0 2px;background:#f0f0f0;color:#000080">Ustawienia domyślne pozycji zlecenia</div>
<div class="t" style="left:714px;top:175px;color:#f00;">Dyspozycja :</div>
<div class="fld" style="left:795px;top:172px;width:175px;height:18px;background:#fff;"><div class="t" style="left:4px;top:3px">Sprzedaż dla kontrahenta</div></div>
<div class="btn" style="left:952px;top:174px;width:17px;height:15px;"><i class="tri"></i></div>
<div class="t" style="left:714px;top:197px;color:#000;">Rodzaj pozycji :</div>
<div class="fld" style="left:795px;top:194px;width:175px;height:18px;background:#fff;"></div>
<div class="btn" style="left:952px;top:196px;width:17px;height:15px;"><i class="tri"></i></div>
<div class="t" style="left:714px;top:219px;color:#000;">Koszty :</div>
<div class="fld" style="left:795px;top:216px;width:175px;height:18px;background:#fff;"></div>
<div class="btn" style="left:952px;top:218px;width:17px;height:15px;"><i class="tri"></i></div>
<div class="etch" style="left:977px;top:162px;width:153px;height:75px;"></div>
<div class="t" style="left:984px;top:174px;color:#f00;">Termin przyjęcia :</div>
<div class="fld" style="left:1105px;top:169px;width:25px;height:19px;background:#fff;"><div class="t" style="left:3px;top:3px">2</div></div>
<div class="t" style="left:984px;top:196px;color:#800000;">Termin zakończenia :</div>
<div class="fld" style="left:1105px;top:191px;width:25px;height:19px;background:#fff;"><div class="t" style="left:3px;top:3px">2</div></div>
<div class="t" style="left:984px;top:219px;color:#800000;">Data zakończenia :</div>
<div class="fld" style="left:1105px;top:213px;width:25px;height:19px;background:#fff;"></div>
<div class="etch" style="left:710px;top:242px;width:264px;height:48px;"></div>
<div class="t" style="left:714px;top:250px;color:#000;">Umowa TU</div>
<div class="fld" style="left:796px;top:247px;width:156px;height:17px;background:#f0f0f0;"></div>
<div class="btn" style="left:952px;top:246px;width:17px;height:19px;"><svg width="8" height="11"><path d="M1 0.5 L7 5.5 L1 10.5 Z" fill="#a0a0a0" stroke="#a0a0a0" stroke-width="0.8"/></svg></div>
<div class="t" style="left:714px;top:272px;color:#000;">Stawka rob.:</div>
<div class="fld" style="left:796px;top:269px;width:77px;height:17px;background:#f0f0f0;"></div>
<div class="fld" style="left:874px;top:269px;width:78px;height:17px;background:#f0f0f0;"></div>
<div class="btn" style="left:952px;top:268px;width:17px;height:20px;"><svg width="8" height="11"><path d="M1 0.5 L7 5.5 L1 10.5 Z" fill="#a0a0a0" stroke="#a0a0a0" stroke-width="0.8"/></svg></div>
<div class="etch" style="left:977px;top:242px;width:153px;height:48px;"></div>
<div class="t" style="left:980px;top:249px;color:#000;">Przeg. okres. :</div>
<div class="fld" style="left:1049px;top:245px;width:61px;height:19px;background:#c0c0c0;"></div>
<div class="t" style="left:980px;top:271px;color:#000;">Bad. techn. :</div>
<div class="fld" style="left:1049px;top:268px;width:61px;height:19px;background:#c0c0c0;"></div>
<div class="etch" style="left:293px;top:300px;width:229px;height:166px;"></div>
<div class="t b" style="left:300px;top:294px;padding:0 2px;background:#f0f0f0;color:#000080">Pojazd</div>
<div class="t" style="left:300px;top:310px;color:#0000ff;">90. Serwis</div>
<div class="btn" style="left:426px;top:305px;width:23px;height:22px;"><svg width="16" height="15"><defs><pattern id="dyl" width="2" height="2" patternUnits="userSpaceOnUse"><rect width="2" height="2" fill="#ffff00"/><rect width="1" height="1" fill="#ffffff"/><rect x="1" y="1" width="1" height="1" fill="#ffffff"/></pattern></defs><path d="M1 4.5 Q1 3.5 2 3.5 H2.5 L3.5 1.5 H7.5 L8.5 3.5 H14 Q15 3.5 15 4.5 V13 Q15 14 14 14 H2 Q1 14 1 13 Z" fill="url(#dyl)" stroke="#000" stroke-width="1.5"/><path d="M3 3.8 H8" stroke="#000" stroke-width="1"/><path d="M5.5 11 L14 1.5" stroke="#f00" stroke-width="2.6"/><path d="M4.5 12 L7 9.5" stroke="#000" stroke-width="2.6"/></svg></div>
<div class="btn" style="left:449px;top:305px;width:23px;height:22px;"><svg width="16" height="15"><defs><pattern id="dyl" width="2" height="2" patternUnits="userSpaceOnUse"><rect width="2" height="2" fill="#ffff00"/><rect width="1" height="1" fill="#ffffff"/><rect x="1" y="1" width="1" height="1" fill="#ffffff"/></pattern></defs><path d="M1 4.5 Q1 3.5 2 3.5 H2.5 L3.5 1.5 H7.5 L8.5 3.5 H14 Q15 3.5 15 4.5 V13 Q15 14 14 14 H2 Q1 14 1 13 Z" fill="url(#dyl)" stroke="#000" stroke-width="1.5"/><path d="M3 3.8 H8" stroke="#000" stroke-width="1"/><path d="M8 5.5 V12.5 M4.5 9 H11.5" stroke="#f00" stroke-width="2.2"/></svg></div>
<div class="btn" style="left:472px;top:305px;width:23px;height:22px;"><svg width="16" height="15"><defs><pattern id="dyl" width="2" height="2" patternUnits="userSpaceOnUse"><rect width="2" height="2" fill="#ffff00"/><rect width="1" height="1" fill="#ffffff"/><rect x="1" y="1" width="1" height="1" fill="#ffffff"/></pattern></defs><path d="M1 4.5 Q1 3.5 2 3.5 H2.5 L3.5 1.5 H7.5 L8.5 3.5 H14 Q15 3.5 15 4.5 V13 Q15 14 14 14 H2 Q1 14 1 13 Z" fill="url(#dyl)" stroke="#000" stroke-width="1.5"/><path d="M3 3.8 H8" stroke="#000" stroke-width="1"/><path d="M4 9 H12" stroke="#f00" stroke-width="2.2"/></svg></div>
<div class="btn" style="left:495px;top:305px;width:23px;height:22px;"><svg width="16" height="16"><circle cx="6" cy="6" r="4.5" fill="#fff" stroke="#000" stroke-width="1.3"/><path d="M9.5 9.5 L14 14" stroke="#000" stroke-width="3.2"/><path d="M9.8 9.8 L13.5 13.5" stroke="#e0d000" stroke-width="1.6"/></svg></div>
<div class="fld" style="left:296px;top:328px;width:222px;height:67px;background:#c0c0c0;"><div class="t b" style="left:0;top:3px;width:222px;text-align:center;color:#800000;line-height:13px">Osobowy FSO POLONEZ POLONEZ
CARGO TRUCK DC 1.6 (FSO)</div></div>
<div class="t" style="left:299px;top:402px;color:#000;">Nr ewid. / Import.</div>
<div class="fld" style="left:384px;top:397px;width:66px;height:20px;background:#fff;"><div class="t b" style="left:3px;top:4px">2203</div></div>
<div class="fld" style="left:453px;top:397px;width:65px;height:20px;background:#fff;"></div>
<div class="t" style="left:299px;top:424px;color:#000;">Nr nadwozia :</div>
<div class="fld" style="left:384px;top:420px;width:134px;height:19px;background:#fff;"><div class="t" style="left:3px;top:3px">SUPB04CBJSN010817</div></div>
<div class="t" style="left:299px;top:446px;color:#000;">Nr rejestracyjny :</div>
<div class="fld" style="left:384px;top:441px;width:134px;height:20px;background:#fff;"><div class="t b" style="left:3px;top:4px">POLONEZ1</div></div>
<div style="left:526px;top:293px;width:600px;height:153px;border-left:1px solid #696969;border-top:1px solid #696969;box-shadow:inset 1px 1px #fff"></div>
<div class="etch" style="left:531px;top:301px;width:272px;height:140px;"></div>
<div class="t b" style="left:539px;top:295px;padding:0 2px;background:#f0f0f0;color:#000080">Kontrahent</div>
<div class="btn" style="left:641px;top:308px;width:22px;height:22px;"><svg width="17" height="17"><path d="M2.5 3.5 H13.5 V13.5 H2.5 Z" fill="#f0f0f0" stroke="#3030c0" stroke-width="1.5"/><path d="M2.5 5.5 H13.5" stroke="#3030c0" stroke-width="1.5"/><path d="M5 1 V4 M11 1 V4" stroke="#202080" stroke-width="1.5"/><rect x="4" y="7" width="2" height="2" fill="#202080"/><rect x="4" y="10" width="2" height="2" fill="#202080"/><circle cx="11" cy="11.5" r="4.3" fill="#f0f0ff" stroke="#3030c0" stroke-width="1.4" stroke-dasharray="1.5 0.6"/><path d="M12.5 9.5 Q11 8.5 10 9.5 Q9.5 10.5 11 11.3 Q12.5 12 12 13 Q11 14 9.5 13" stroke="#101060" stroke-width="1.2" fill="none"/></svg></div>
<div class="btn" style="left:664px;top:308px;width:22px;height:22px;"><svg width="16" height="15"><defs><pattern id="dyl" width="2" height="2" patternUnits="userSpaceOnUse"><rect width="2" height="2" fill="#ffff00"/><rect width="1" height="1" fill="#ffffff"/><rect x="1" y="1" width="1" height="1" fill="#ffffff"/></pattern></defs><path d="M1 4.5 Q1 3.5 2 3.5 H2.5 L3.5 1.5 H7.5 L8.5 3.5 H14 Q15 3.5 15 4.5 V13 Q15 14 14 14 H2 Q1 14 1 13 Z" fill="url(#dyl)" stroke="#000" stroke-width="1.5"/><path d="M3 3.8 H8" stroke="#000" stroke-width="1"/><path d="M5.5 5.5 V10 Q5.5 12 8 12 Q10.5 12 10.5 10 V5.5" stroke="#000" stroke-width="2.2" fill="none"/></svg></div>
<div class="btn" style="left:687px;top:308px;width:22px;height:22px;"><svg width="16" height="15"><defs><pattern id="dyl" width="2" height="2" patternUnits="userSpaceOnUse"><rect width="2" height="2" fill="#ffff00"/><rect width="1" height="1" fill="#ffffff"/><rect x="1" y="1" width="1" height="1" fill="#ffffff"/></pattern></defs><path d="M1 4.5 Q1 3.5 2 3.5 H2.5 L3.5 1.5 H7.5 L8.5 3.5 H14 Q15 3.5 15 4.5 V13 Q15 14 14 14 H2 Q1 14 1 13 Z" fill="url(#dyl)" stroke="#000" stroke-width="1.5"/><path d="M3 3.8 H8" stroke="#000" stroke-width="1"/><circle cx="8" cy="9" r="4.3" fill="#0000ff"/><path d="M8 8 V11.5 M8 5.8 V6.8" stroke="#fff" stroke-width="1.2"/></svg></div>
<div class="btn" style="left:710px;top:308px;width:22px;height:22px;"><svg width="16" height="15"><defs><pattern id="dyl" width="2" height="2" patternUnits="userSpaceOnUse"><rect width="2" height="2" fill="#ffff00"/><rect width="1" height="1" fill="#ffffff"/><rect x="1" y="1" width="1" height="1" fill="#ffffff"/></pattern></defs><path d="M1 4.5 Q1 3.5 2 3.5 H2.5 L3.5 1.5 H7.5 L8.5 3.5 H14 Q15 3.5 15 4.5 V13 Q15 14 14 14 H2 Q1 14 1 13 Z" fill="url(#dyl)" stroke="#000" stroke-width="1.5"/><path d="M3 3.8 H8" stroke="#000" stroke-width="1"/><path d="M5.5 11 L14 1.5" stroke="#f00" stroke-width="2.6"/><path d="M4.5 12 L7 9.5" stroke="#000" stroke-width="2.6"/></svg></div>
<div class="btn" style="left:733px;top:308px;width:22px;height:22px;"><svg width="16" height="15"><defs><pattern id="dyl" width="2" height="2" patternUnits="userSpaceOnUse"><rect width="2" height="2" fill="#ffff00"/><rect width="1" height="1" fill="#ffffff"/><rect x="1" y="1" width="1" height="1" fill="#ffffff"/></pattern></defs><path d="M1 4.5 Q1 3.5 2 3.5 H2.5 L3.5 1.5 H7.5 L8.5 3.5 H14 Q15 3.5 15 4.5 V13 Q15 14 14 14 H2 Q1 14 1 13 Z" fill="url(#dyl)" stroke="#000" stroke-width="1.5"/><path d="M3 3.8 H8" stroke="#000" stroke-width="1"/><path d="M8 5.5 V12.5 M4.5 9 H11.5" stroke="#f00" stroke-width="2.2"/></svg></div>
<div class="btn" style="left:756px;top:308px;width:22px;height:22px;"><svg width="16" height="15"><defs><pattern id="dyl" width="2" height="2" patternUnits="userSpaceOnUse"><rect width="2" height="2" fill="#ffff00"/><rect width="1" height="1" fill="#ffffff"/><rect x="1" y="1" width="1" height="1" fill="#ffffff"/></pattern></defs><path d="M1 4.5 Q1 3.5 2 3.5 H2.5 L3.5 1.5 H7.5 L8.5 3.5 H14 Q15 3.5 15 4.5 V13 Q15 14 14 14 H2 Q1 14 1 13 Z" fill="url(#dyl)" stroke="#000" stroke-width="1.5"/><path d="M3 3.8 H8" stroke="#000" stroke-width="1"/><path d="M4 9 H12" stroke="#f00" stroke-width="2.2"/></svg></div>
<div class="btn" style="left:779px;top:308px;width:22px;height:22px;"><svg width="16" height="16"><circle cx="6" cy="6" r="4.5" fill="#fff" stroke="#000" stroke-width="1.3"/><path d="M9.5 9.5 L14 14" stroke="#000" stroke-width="3.2"/><path d="M9.8 9.8 L13.5 13.5" stroke="#e0d000" stroke-width="1.6"/></svg></div>
<div class="fld" style="left:534px;top:331px;width:267px;height:70px;background:#fff;"><div class="t b" style="left:3px;top:3px;color:#800000;line-height:13px;letter-spacing:0.1px">FIRMA SP. Z O.O. 496
64-100; Leszno; Ignacego Paderewskiego
(Kontrahent - klient detaliczny)</div></div>
<svg style="position:absolute;left:535px;top:403px" width="16" height="16"><circle cx="8" cy="8" r="7.3" fill="#00e000" stroke="#000" stroke-width="0.8"/><circle cx="5.5" cy="6" r="1" fill="#000"/><circle cx="10.5" cy="6" r="1" fill="#000"/><path d="M4 9 Q8 13 12 9" stroke="#000" fill="none" stroke-width="1.1"/></svg>
<div class="t" style="left:675px;top:405px;font-family:'Liberation Serif',serif;font-size:9.5px">Data IRR:</div>
<div class="fld" style="left:718px;top:403px;width:51px;height:14px;background:#f0f0f0;"></div>
<div class="fld" style="left:770px;top:403px;width:13px;height:14px;background:#f0f0f0;"></div>
<div class="t" style="left:785px;top:404px;color:#000;">:</div>
<div class="fld" style="left:788px;top:403px;width:13px;height:14px;background:#f0f0f0;"></div>
<div class="t" style="left:538px;top:422px;color:#000;">Nr:</div>
<div class="fld" style="left:553px;top:419px;width:54px;height:20px;background:#fff;"><div class="t b" style="left:3px;top:4px">496</div></div>
<div class="t" style="left:614px;top:422px;color:#000;">NIP :</div>
<div class="fld" style="left:640px;top:419px;width:161px;height:20px;background:#fff;"><div class="t b" style="left:3px;top:4px;letter-spacing:0.5px">4656346312</div></div>
<svg style="position:absolute;left:0;top:0" width="1720" height="843"><path d="M897 446 H1140 V462 L1136 467 H901 L897 462 Z" fill="#f0f0f0"/><path d="M897.5 462 V446.5 H1140" fill="none" stroke="#a0a0a0"/><path d="M898.5 462 V447.5 H1140" fill="none" stroke="#696969"/><path d="M899.5 462 V448.5 H1140" fill="none" stroke="#fff"/><path d="M898 462 L901.5 465.5 H1135.5 L1139.5 461.5" fill="none" stroke="#a0a0a0"/><path d="M901 466.5 H1136" fill="none" stroke="#696969"/><path d="M526 444 H898 V462 L894 467 H530 L526 462 Z" fill="#f0f0f0"/><path d="M526.5 444 V462" fill="none" stroke="#696969"/><path d="M527.5 444 V462" fill="none" stroke="#fff"/><path d="M527 462 L530.5 465.5 H893.5 L897.5 461.5" fill="none" stroke="#a0a0a0"/><path d="M530 466.5 H894" fill="none" stroke="#696969"/></svg>
<div class="t b" style="left:625px;top:451px;width:176px;text-align:center;color:#c00000">Kontrahent / dane kontaktowe</div>
<div class="t" style="left:1027px;top:451px;color:#f00;">Właściciel / Użytkownik</div>
<div class="etch" style="left:807px;top:301px;width:323px;height:140px;"></div>
<div class="t b" style="left:814px;top:295px;padding:0 2px;background:#f0f0f0;color:#000080">Kontakt</div>
<div class="t" style="left:812px;top:312px;color:#000;">Imię :</div>
<div class="fld" style="left:888px;top:307px;width:242px;height:19px;background:#fff;"></div>
<div class="btn" style="left:1112px;top:309px;width:17px;height:16px;"><i class="tri"></i></div>
<div class="btn" style="left:1100px;top:309px;width:17px;height:16px;"><i class="tri"></i></div>
<div class="t" style="left:812px;top:334px;color:#000;">Nazwisko :</div>
<div class="fld" style="left:888px;top:330px;width:242px;height:19px;background:#fff;"></div>
<div class="btn" style="left:1112px;top:332px;width:17px;height:16px;"><i class="tri"></i></div>
<div class="btn" style="left:1100px;top:332px;width:17px;height:16px;"><i class="tri"></i></div>
<div class="t" style="left:812px;top:356px;color:#000;">Telefon :</div>
<div class="fld" style="left:888px;top:352px;width:242px;height:19px;background:#fff;"></div>
<div class="t" style="left:812px;top:378px;color:#000;">Telefon kom. :</div>
<div class="fld" style="left:888px;top:374px;width:242px;height:19px;background:#fff;"></div>
<div class="t" style="left:812px;top:400px;color:#000;">Email :</div>
<div class="fld" style="left:888px;top:396px;width:242px;height:19px;background:#fff;"></div>
<div class="fld" style="left:812px;top:423px;width:13px;height:13px;background:#fff"><svg style="position:absolute;left:2px;top:2px" width="9" height="9" viewBox="0 0 9 9"><path d="M1.5 4 L3.5 6.5 L8 1.5" stroke="#000" stroke-width="1.8" fill="none"/></svg></div>
<div class="t" style="left:830px;top:423px;color:#000;">Zgoda na kontakt posprzedażny</div>
<div class="btn" style="left:1000px;top:420px;width:130px;height:20px;"><span class="b" style="position:static;color:#0000ff;margin-right:16px">Aktualizuj kontakty</span></div>
<div style="left:292px;top:471px;width:830px;height:172px;border-left:1px solid #696969;border-top:1px solid #696969;box-shadow:inset 1px 1px #fff"></div>
<div class="etch" style="left:298px;top:482px;width:419px;height:94px;"></div>
<div class="t" style="left:304px;top:490px;color:#800000;">Nadzorujący zlecenie :</div>
<div class="fld" style="left:418px;top:486px;width:259px;height:19px;background:#fff;"></div>
<div class="btn" style="left:659px;top:488px;width:17px;height:16px;"><i class="tri"></i></div>
<div class="btn" style="left:680px;top:487px;width:17px;height:17px;"><svg width="8" height="11"><path d="M1 0.5 L7 5.5 L1 10.5 Z" fill="#008080" stroke="#000" stroke-width="0.8"/></svg></div>
<div class="fld" style="left:700px;top:489px;width:13px;height:13px;background:#fff"><svg style="position:absolute;left:2px;top:2px" width="9" height="9" viewBox="0 0 9 9"><path d="M1.5 4 L3.5 6.5 L8 1.5" stroke="#000" stroke-width="1.8" fill="none"/></svg></div>
<div class="t" style="left:304px;top:512px;color:#800000;">Mechanik :</div>
<div class="fld" style="left:418px;top:508px;width:259px;height:19px;background:#fff;"></div>
<div class="btn" style="left:659px;top:510px;width:17px;height:16px;"><i class="tri"></i></div>
<div class="btn" style="left:680px;top:509px;width:17px;height:17px;"><svg width="8" height="11"><path d="M1 0.5 L7 5.5 L1 10.5 Z" fill="#008080" stroke="#000" stroke-width="0.8"/></svg></div>
<div class="fld" style="left:700px;top:511px;width:13px;height:13px;background:#fff"><svg style="position:absolute;left:2px;top:2px" width="9" height="9" viewBox="0 0 9 9"><path d="M1.5 4 L3.5 6.5 L8 1.5" stroke="#000" stroke-width="1.8" fill="none"/></svg></div>
<div class="t" style="left:304px;top:532px;color:#800000;">Przyjęcie pojazdu :</div>
<div class="fld" style="left:418px;top:530px;width:131px;height:19px;background:#fff;"></div>
<div class="btn" style="left:531px;top:532px;width:17px;height:16px;"><i class="tri"></i></div>
<div class="btn" style="left:552px;top:531px;width:17px;height:17px;"><svg width="8" height="11"><path d="M1 0.5 L7 5.5 L1 10.5 Z" fill="#008080" stroke="#000" stroke-width="0.8"/></svg></div>
<div class="fld" style="left:572px;top:533px;width:13px;height:13px;background:#fff"><svg style="position:absolute;left:2px;top:2px" width="9" height="9" viewBox="0 0 9 9"><path d="M1.5 4 L3.5 6.5 L8 1.5" stroke="#000" stroke-width="1.8" fill="none"/></svg></div>
<div class="fld" style="left:590px;top:530px;width:62px;height:19px;background:#fff;"></div>
<div class="btn" style="left:655px;top:531px;width:17px;height:17px;"><svg width="8" height="11"><path d="M1 0.5 L7 5.5 L1 10.5 Z" fill="#008080" stroke="#000" stroke-width="0.8"/></svg></div>
<div class="fld" style="left:673px;top:530px;width:18px;height:19px;background:#fff;"><div class="t" style="left:3px;top:3px">00</div></div>
<div class="t" style="left:691px;top:531px;color:#00f;">:</div>
<div class="fld" style="left:695px;top:530px;width:18px;height:19px;background:#fff;"><div class="t" style="left:3px;top:3px">00</div></div>
<div class="t" style="left:304px;top:554px;color:#800000;">Wydanie pojazdu :</div>
<div class="fld" style="left:418px;top:552px;width:131px;height:19px;background:#fff;"></div>
<div class="btn" style="left:531px;top:554px;width:17px;height:16px;"><i class="tri"></i></div>
<div class="btn" style="left:552px;top:553px;width:17px;height:17px;"><svg width="8" height="11"><path d="M1 0.5 L7 5.5 L1 10.5 Z" fill="#008080" stroke="#000" stroke-width="0.8"/></svg></div>
<div class="fld" style="left:572px;top:555px;width:13px;height:13px;background:#fff"><svg style="position:absolute;left:2px;top:2px" width="9" height="9" viewBox="0 0 9 9"><path d="M1.5 4 L3.5 6.5 L8 1.5" stroke="#000" stroke-width="1.8" fill="none"/></svg></div>
<div class="fld" style="left:590px;top:552px;width:62px;height:19px;background:#fff;"></div>
<div class="btn" style="left:655px;top:553px;width:17px;height:17px;"><svg width="8" height="11"><path d="M1 0.5 L7 5.5 L1 10.5 Z" fill="#008080" stroke="#000" stroke-width="0.8"/></svg></div>
<div class="fld" style="left:673px;top:552px;width:18px;height:19px;background:#fff;"><div class="t" style="left:3px;top:3px">00</div></div>
<div class="t" style="left:691px;top:553px;color:#00f;">:</div>
<div class="fld" style="left:695px;top:552px;width:18px;height:19px;background:#fff;"><div class="t" style="left:3px;top:3px">00</div></div>
<div class="etch" style="left:298px;top:584px;width:210px;height:54px;"></div>
<div class="t" style="left:302px;top:596px;color:#f00;">Stan licznika :</div>
<div class="fld" style="left:372px;top:592px;width:108px;height:19px;background:#fff;"><div class="t b" style="right:3px;top:3px;color:#0000ff">33453</div></div>
<div class="t" style="left:486px;top:597px;color:#000080;">km</div>
<div class="t" style="left:302px;top:618px;color:#000;">Ilość paliwa :</div>
<div class="fld" style="left:372px;top:614px;width:130px;height:19px;background:#fff;"></div>
<div class="btn" style="left:484px;top:616px;width:17px;height:16px;"><i class="tri"></i></div>
<div class="etch" style="left:515px;top:584px;width:202px;height:54px;"></div>
<div class="t b" style="left:522px;top:578px;padding:0 2px;background:#f0f0f0;color:#000080">Przewidywana wartość</div>
<div class="t" style="left:518px;top:598px;color:#000;">Robocizny :</div>
<div class="fld" style="left:587px;top:594px;width:109px;height:19px;background:#fff;"><div class="t b" style="right:3px;top:3px">0,00</div></div>
<div class="t" style="left:702px;top:598px;color:#000080;">zł</div>
<div class="t" style="left:518px;top:620px;color:#000;">Materiałów :</div>
<div class="fld" style="left:587px;top:616px;width:109px;height:18px;background:#fff;"><div class="t b" style="right:3px;top:3px">0,00</div></div>
<div class="t" style="left:702px;top:620px;color:#000080;">zł</div>
<div class="etch" style="left:723px;top:482px;width:407px;height:157px;"></div>
<div class="fld" style="left:728px;top:488px;width:402px;height:146px;background:#fff;"><div class="t" style="left:3px;top:4px">opis</div></div>
<svg style="position:absolute;left:0;top:0" width="1720" height="843"><path d="M429 641 H570 V658 L566 663 H433 L429 658 Z" fill="#f0f0f0"/><path d="M429.5 658 V641.5 H570" fill="none" stroke="#a0a0a0"/><path d="M430.5 658 V642.5 H570" fill="none" stroke="#696969"/><path d="M431.5 658 V643.5 H570" fill="none" stroke="#fff"/><path d="M430 658 L433.5 661.5 H565.5 L569.5 657.5" fill="none" stroke="#a0a0a0"/><path d="M433 662.5 H566" fill="none" stroke="#696969"/><path d="M568 641 H709 V658 L705 663 H572 L568 658 Z" fill="#f0f0f0"/><path d="M568.5 658 V641.5 H709" fill="none" stroke="#a0a0a0"/><path d="M569.5 658 V642.5 H709" fill="none" stroke="#696969"/><path d="M570.5 658 V643.5 H709" fill="none" stroke="#fff"/><path d="M569 658 L572.5 661.5 H704.5 L708.5 657.5" fill="none" stroke="#a0a0a0"/><path d="M572 662.5 H705" fill="none" stroke="#696969"/><path d="M707 641 H848 V658 L844 663 H711 L707 658 Z" fill="#f0f0f0"/><path d="M707.5 658 V641.5 H848" fill="none" stroke="#a0a0a0"/><path d="M708.5 658 V642.5 H848" fill="none" stroke="#696969"/><path d="M709.5 658 V643.5 H848" fill="none" stroke="#fff"/><path d="M708 658 L711.5 661.5 H843.5 L847.5 657.5" fill="none" stroke="#a0a0a0"/><path d="M711 662.5 H844" fill="none" stroke="#696969"/><path d="M846 641 H987 V658 L983 663 H850 L846 658 Z" fill="#f0f0f0"/><path d="M846.5 658 V641.5 H987" fill="none" stroke="#a0a0a0"/><path d="M847.5 658 V642.5 H987" fill="none" stroke="#696969"/><path d="M848.5 658 V643.5 H987" fill="none" stroke="#fff"/><path d="M847 658 L850.5 661.5 H982.5 L986.5 657.5" fill="none" stroke="#a0a0a0"/><path d="M850 662.5 H983" fill="none" stroke="#696969"/><path d="M985 641 H1126 V658 L1122 663 H989 L985 658 Z" fill="#f0f0f0"/><path d="M985.5 658 V641.5 H1126" fill="none" stroke="#a0a0a0"/><path d="M986.5 658 V642.5 H1126" fill="none" stroke="#696969"/><path d="M987.5 658 V643.5 H1126" fill="none" stroke="#fff"/><path d="M986 658 L989.5 661.5 H1121.5 L1125.5 657.5" fill="none" stroke="#a0a0a0"/><path d="M989 662.5 H1122" fill="none" stroke="#696969"/><path d="M292 640 H431 V658 L427 663 H296 L292 658 Z" fill="#f0f0f0"/><path d="M292.5 640 V658" fill="none" stroke="#696969"/><path d="M293.5 640 V658" fill="none" stroke="#fff"/><path d="M293 658 L296.5 661.5 H426.5 L430.5 657.5" fill="none" stroke="#a0a0a0"/><path d="M296 662.5 H427" fill="none" stroke="#696969"/></svg>
<div class="t b" style="left:292px;top:648px;width:139px;text-align:center;color:#c00000">Opis naprawy</div>
<div class="t" style="left:431px;top:648px;width:139px;text-align:center;color:#c00000">Dodatkowe</div>
<div class="t" style="left:570px;top:648px;width:139px;text-align:center;color:#c00000">Usterki</div>
<div class="t" style="left:709px;top:648px;width:139px;text-align:center;color:#c00000">Stan pojazdu/uwagi</div>
<div class="t" style="left:848px;top:648px;width:139px;text-align:center;color:#c00000">Uwagi na fakturę</div>
<div class="t" style="left:987px;top:648px;width:139px;text-align:center;color:#c00000">Uwagi do kosztów</div>
<div style="left:288px;top:668px;width:830px;height:1px;background:#a0a0a0"></div><div style="left:288px;top:669px;width:830px;height:1px;background:#696969"></div>
<div style="left:1112px;top:129px;width:379px;height:578px;background:#f2f2f2;border:1px solid #bcbcbc"></div>
<div style="left:1113px;top:130px;width:30px;height:575px;background:#f0f0f0"></div>
<div class="t" style="left:1147px;top:135px;font-size:12px;letter-spacing:-0.15px;line-height:16px;color:#000">AutoTeam VGP - Utwórz szansę serwisową</div>
<div class="t" style="left:1147px;top:157px;font-size:12px;letter-spacing:-0.15px;line-height:16px;color:#000">SPF - Aktualizuj kosztorys</div>
<div class="t" style="left:1147px;top:179px;font-size:12px;letter-spacing:-0.15px;line-height:16px;color:#000">SPF - Importuj dane do zlecenia z SPF</div>
<div class="t" style="left:1147px;top:201px;font-size:12px;letter-spacing:-0.15px;line-height:16px;color:#000">SPF - Weryfikuj kosztorys</div>
<div class="t" style="left:1147px;top:223px;font-size:12px;letter-spacing:-0.15px;line-height:16px;color:#000">SPF - Weryfikuj samochód</div>
<div class="t" style="left:1147px;top:245px;font-size:12px;letter-spacing:-0.15px;line-height:16px;color:#000">SPF - Wyślij kosztorys</div>
<div class="t" style="left:1147px;top:267px;font-size:12px;letter-spacing:-0.15px;line-height:16px;color:#000">SV Cloud - Załóż naprawę serwisu</div>
<div class="t" style="left:1147px;top:289px;font-size:12px;letter-spacing:-0.15px;line-height:16px;color:#000">VW Leasing - Weryfikuj samochód</div>
<div class="t" style="left:1147px;top:311px;font-size:12px;letter-spacing:-0.15px;line-height:16px;color:#000">VW Leasing - Załóż lub aktualizuj wniosek</div>
<div class="t" style="left:1147px;top:333px;font-size:12px;letter-spacing:-0.15px;line-height:16px;color:#000">AutoTeam SAP - pokaż kartotekę samochodu</div>
<div class="t" style="left:1147px;top:355px;font-size:12px;letter-spacing:-0.15px;line-height:16px;color:#000">BTAC - historia wysyłek</div>
<div class="t" style="left:1147px;top:377px;font-size:12px;letter-spacing:-0.15px;line-height:16px;color:#000">BTAC - nadaj numer</div>
<div class="t" style="left:1147px;top:399px;font-size:12px;letter-spacing:-0.15px;line-height:16px;color:#000">BTAC - pokaż bufor</div>
<div class="t" style="left:1147px;top:421px;font-size:12px;letter-spacing:-0.15px;line-height:16px;color:#000">BTAC - usuń zlecenie</div>
<div class="t" style="left:1147px;top:443px;font-size:12px;letter-spacing:-0.15px;line-height:16px;color:#000">ELSA-R - sprawdzenie akcji fabrycznych</div>
<div class="t" style="left:1147px;top:465px;font-size:12px;letter-spacing:-0.15px;line-height:16px;color:#000">Mobile Advisor - synchronizuj dane z przyjęcia pojazdu</div>
<div class="t" style="left:1147px;top:487px;font-size:12px;letter-spacing:-0.15px;line-height:16px;color:#000">SMS – podziękowanie za wizytę</div>
<div class="t" style="left:1147px;top:509px;font-size:12px;letter-spacing:-0.15px;line-height:16px;color:#000">SMS - Samochód gotowy</div>
<div class="t" style="left:1147px;top:531px;font-size:12px;letter-spacing:-0.15px;line-height:16px;color:#000">UMCS - Powiąż zlecenie</div>
<div class="t" style="left:1147px;top:553px;font-size:12px;letter-spacing:-0.15px;line-height:16px;color:#000">UMCS - Wstaw dane do zlecenia</div>
<div class="t" style="left:1147px;top:575px;font-size:12px;letter-spacing:-0.15px;line-height:16px;color:#000">SV Blacharnia - powiąż z modułem</div>
<div class="t" style="left:1147px;top:597px;font-size:12px;letter-spacing:-0.15px;line-height:16px;color:#000">SV Blacharnia - utwórz na podstawie szkody</div>
<div class="t" style="left:1147px;top:619px;font-size:12px;letter-spacing:-0.15px;line-height:16px;color:#000">SV Blacharnia - aktualizuj na podstawie szkody</div>
<div class="t" style="left:1147px;top:641px;font-size:12px;letter-spacing:-0.15px;line-height:16px;color:#000">Planer Serwisu - utwórz na podstawie umówienia</div>
<div style="left:1115px;top:660px;width:373px;height:22px;background:#91c9f7"></div>
<div class="t" style="left:1147px;top:663px;font-size:12px;letter-spacing:-0.15px;line-height:16px;color:#000">Planer Serwisu – powiąż z umówieniem</div>
<div class="t" style="left:1147px;top:685px;font-size:12px;letter-spacing:-0.15px;line-height:16px;color:#000">Planer Serwisu – usuń powiązanie z umówieniem</div>
<svg style="position:absolute;left:1295px;top:673px" width="13" height="20" viewBox="0 0 13 20"><path d="M0.5 0.5 L0.5 16.5 L4.5 12.5 L7 18.5 L9 17.5 L6.5 11.5 L12 11.5 Z" fill="#fff" stroke="#000" stroke-width="1"/></svg>
<div style="left:1099px;top:96px;width:67px;height:41px;border:4px solid #00c800"></div>
<div style="left:1109px;top:652px;width:385px;height:39px;border:4px solid #00c800"></div></body></html>
